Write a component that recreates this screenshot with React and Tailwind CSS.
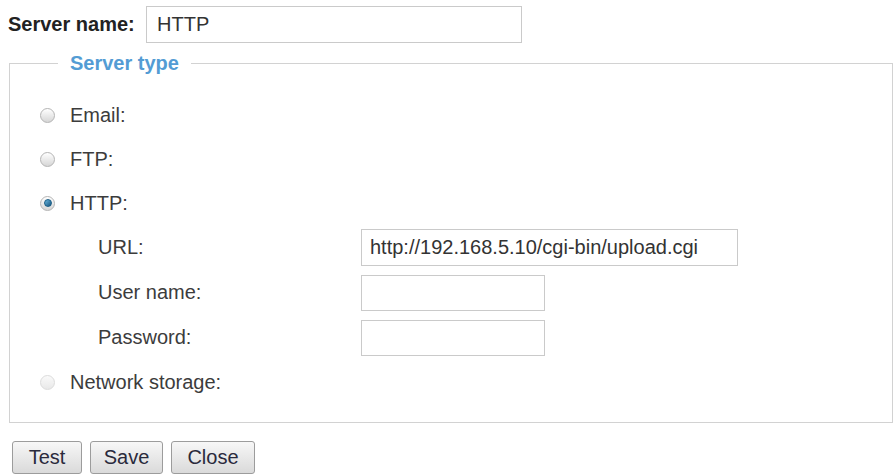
import { useState } from 'react'

const font = { fontFamily: '"Liberation Sans", Arial, sans-serif' }

const Radio = ({ checked, disabled, onClick }) => (
  <button
    type="button"
    onClick={onClick}
    className={
      disabled
        ? 'w-[15px] h-[15px] rounded-full border border-[#dcdcdc] bg-gradient-to-b from-[#fafafa] to-[#e8e8e8] flex items-center justify-center shrink-0'
        : 'w-[15px] h-[15px] rounded-full border border-[#b4b4b4] bg-gradient-to-b from-[#ffffff] to-[#d6d6d6] flex items-center justify-center shrink-0'
    }
  >
    {checked && (
      <span className="w-[8px] h-[8px] rounded-full bg-gradient-to-br from-[#6ab8e0] to-[#15557f] border border-[#1a5d85]" />
    )}
  </button>
)

const Field = ({ label, value, wide }) => (
  <div className="flex items-center h-[45px]">
    <span className="w-[351px] pl-[88px]">{label}</span>
    <input
      defaultValue={value}
      className={
        wide
          ? 'w-[377px] h-[37px] border border-[#cacaca] pl-[8px] outline-none text-[#333]'
          : 'w-[184px] h-[36px] border border-[#cacaca] pl-[8px] outline-none text-[#333]'
      }
    />
  </div>
)

const buttons = [
  { label: 'Test', cls: 'w-[70px]' },
  { label: 'Save', cls: 'w-[73px]' },
  { label: 'Close', cls: 'w-[84px]' },
]

export default function App() {
  const [type, setType] = useState('http')

  const types = [
    { id: 'email', label: 'Email:' },
    { id: 'ftp', label: 'FTP:' },
    { id: 'http', label: 'HTTP:' },
  ]

  return (
    <div style={font} className="w-[896px] h-[476px] bg-white text-[20px] leading-[23px] text-[#3c3c3c] pl-[9px] pt-[6px]">
      <div className="flex items-center">
        <span className="font-bold text-[#222] -ml-px w-[138px]">Server name:</span>
        <input
          defaultValue="HTTP"
          className="w-[376px] h-[37px] border border-[#cacaca] pl-[10px] outline-none text-[#333]"
        />
      </div>

      <fieldset className="mt-[9px] w-[884px] border border-[#d2d2d2] pl-[30px] pb-[18px]">
        <legend className="ml-[18px] px-3 font-bold text-[#539cd4]">Server type</legend>
        <div className="pt-[18px]">
          {types.map((t) => (
            <div key={t.id} className="flex items-center h-[44px] gap-[15px]">
              <Radio checked={type === t.id} onClick={() => setType(t.id)} />
              <span>{t.label}</span>
            </div>
          ))}
          <div className="-ml-[30px]">
            <Field label="URL:" value="http://192.168.5.10/cgi-bin/upload.cgi" wide />
            <Field label="User name:" value="" />
            <Field label="Password:" value="" />
          </div>
          <div className="flex items-center h-[44px] gap-[15px]">
            <Radio disabled />
            <span>Network storage:</span>
          </div>
        </div>
      </fieldset>

      <div className="flex gap-[8px] mt-[18px] ml-[3px]">
        {buttons.map((b) => (
          <button
            key={b.label}
            className={`${b.cls} h-[33px] rounded-[3px] border border-[#9c9c9c] bg-gradient-to-b from-[#f7f7f7] to-[#dadada] text-[#2a2a3c]`}
          >
            {b.label}
          </button>
        ))}
      </div>
    </div>
  )
}
